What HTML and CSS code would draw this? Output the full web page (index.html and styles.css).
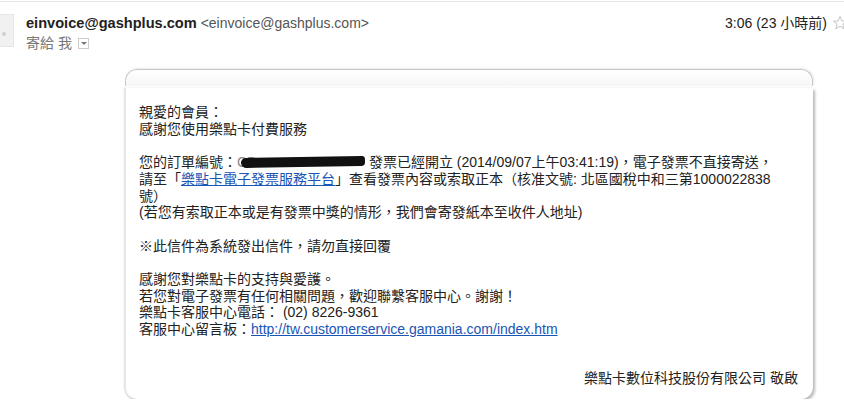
FILE: index.html
```html
<!DOCTYPE html>
<html lang="zh-Hant">
<head>
  <meta charset="UTF-8">
  <title>einvoice@gashplus.com</title>
  <link rel="stylesheet" href="styles.css">
</head>
<body>

<div class="top-rule"></div>

<div class="msg-head">
  <div class="avatar"><span class="avatar-dot"></span></div>
  <div class="who">
    <div class="from-line"><b class="sender">einvoice@gashplus.com</b> <span class="addr">&lt;einvoice@gashplus.com&gt;</span></div>
    <div class="to-line">寄給 我 <span class="drop"></span></div>
  </div>
  <div class="when">
    3:06 (23 小時前)
    <svg class="star" width="16" height="16" viewBox="0 0 16 16">
      <polygon points="8,1.5 9.9,6 14.6,6.2 10.9,9.2 12.2,13.9 8,11.2 3.8,13.9 5.1,9.2 1.4,6.2 6.1,6" fill="none" stroke="#c4c4c4" stroke-width="1"/>
    </svg>
  </div>
</div>

<div class="mail">
  <div class="mail-cap"></div>
  <div class="mail-body">
    <p>親愛的會員：<br>感謝您使用樂點卡付費服務</p>
    <p>
      您的訂單編號：<span class="redact-wrap"><span class="peek">CP</span><span class="redact"></span></span> 發票已經開立 (2014/09/07上午03:41:19)，電子發票不直接寄送，<br>
      請至「<a href="#">樂點卡電子發票服務平台</a>」查看發票內容或索取正本（核准文號: 北區國稅中和三第1000022838<br>
      號）<br>
      (若您有索取正本或是有發票中獎的情形，我們會寄發紙本至收件人地址)
    </p>
    <p>※此信件為系統發出信件，請勿直接回覆</p>
    <p>
      感謝您對樂點卡的支持與愛護。<br>
      若您對電子發票有任何相關問題，歡迎聯繫客服中心。謝謝！<br>
      樂點卡客服中心電話： (02) 8226-9361<br>
      客服中心留言板：<a href="#">http://tw.customerservice.gamania.com/index.htm</a>
    </p>
    <p class="sign">樂點卡數位科技股份有限公司 敬啟</p>
  </div>
</div>

</body>
</html>
```

FILE: styles.css
```css
body { margin: 0; background: #fff; color: #222; font-family: "Liberation Sans", Arial, "Noto Sans CJK TC", sans-serif; font-size: 14px; overflow: hidden; }

.top-rule { height: 1px; background: #e3e3e3; margin-top: 1px; }

.msg-head { display: flex; align-items: flex-start; height: 66px; padding-top: 12px; box-sizing: border-box; }
.avatar { width: 13px; height: 31px; background: #f1f1f1; border: 1px solid #e6e6e6; border-left: 0; position: relative; flex: none; }
.avatar-dot { position: absolute; left: 2px; top: 17px; width: 4px; height: 4px; background: #cfcfcf; border-radius: 2px; }
.who { margin-left: 12px; flex: 1; }
.from-line { line-height: 18px; white-space: nowrap; }
.sender { font-size: 14.6px; color: #222; }
.addr { color: #555; font-size: 14px; }
.to-line { color: #777; line-height: 20px; margin-top: 1px; }
.drop { display: inline-block; width: 9px; height: 9px; border: 1px solid #ccc; vertical-align: -1px; margin-left: 2px; position: relative; }
.drop::after { content: ""; position: absolute; left: 2px; top: 3px; border: 3px solid transparent; border-top-color: #777; border-bottom: 0; }
.when { display: flex; align-items: center; gap: 5px; margin-right: -4px; line-height: 18px; color: #222; white-space: nowrap; }
.star { margin-top: -1px; }

.mail { margin-left: 125px; width: 688px; margin-top: 1px; }
.mail-cap { height: 16px; border-radius: 12px 12px 0 0; background: linear-gradient(#fff, #f6f6f6); border: 1px solid #c8c8c8; border-bottom: 0; box-shadow: 1px -1px 2px rgba(0,0,0,0.08); }
.mail-body { margin-top: 2px; height: 311px; box-sizing: border-box; padding: 16px 15px 0 13px; border-radius: 0 0 12px 12px; box-shadow: 2px 2px 3px rgba(0,0,0,0.28), -1px 0 2px rgba(0,0,0,0.12); border-left: 1px solid #e6e6e6; line-height: 16.7px; color: #222; white-space: nowrap; }
.mail-body p { margin: 0 0 16.7px; }
.mail-body a { color: #1a55b5; }
.redact-wrap { display: inline-block; position: relative; width: 128px; height: 12px; vertical-align: -1px; }
.peek { position: absolute; left: 0; top: -2px; color: #888; line-height: 16px; }
.redact { position: absolute; left: 4px; top: 1px; width: 124px; height: 10px; background: #111; border-radius: 6px 4px 5px 7px; transform: rotate(-1deg); }
.sign { text-align: right; margin-top: 32px !important; }
```
